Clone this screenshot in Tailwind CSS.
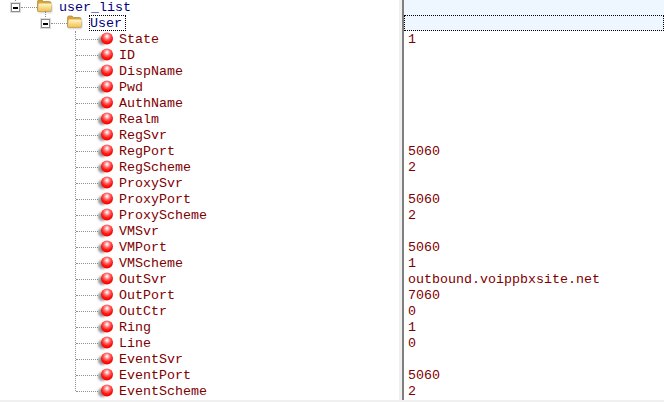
<!DOCTYPE html>
<html lang="en">
<head>
    <title>user_list</title>
    <meta charset="UTF-8">
    <script src="https://cdn.jsdelivr.net/npm/@tailwindcss/browser@4"></script>
</head>
<body class="bg-white overflow-hidden">
    <svg width="0" height="0" class="absolute">
        <defs>
            <radialGradient id="ball" cx="0.5" cy="0.32" r="0.72">
                <stop offset="0" stop-color="#ffffff"/>
                <stop offset="0.14" stop-color="#ffd0d0"/>
                <stop offset="0.38" stop-color="#ff6464"/>
                <stop offset="0.68" stop-color="#ff1010"/>
                <stop offset="1" stop-color="#f40000"/>
            </radialGradient>
            <linearGradient id="folder" x1="0" y1="0" x2="0" y2="1">
                <stop offset="0" stop-color="#fff8c8"/>
                <stop offset="1" stop-color="#efbe50"/>
            </linearGradient>
            <filter id="soft" x="-50%" y="-50%" width="200%" height="200%">
                <feGaussianBlur stdDeviation="1"/>
            </filter>
            <symbol id="folder-icon" viewBox="0 0 16 14">
                <path d="M1.500 13.500h13.500v-8h-13.500z" fill="#000" opacity="0.25" filter="url(#soft)"/>
                <path d="M.5 11.500V2.500q0-1.500 1.500-1.500h3L6.500 2.500h6q1.500 0 1.500 1.500v7.500q0 1-1 1H1.500q-1 0-1-1z" fill="#d9a53a" stroke="#a8873c" stroke-width="0.7"/>
                <path d="M1 11.500L1.500 5.500q0-1 1-1h10.500q1.500 0 1.500 1l-.5 6q0 1-1 1H2q-1 0-1-1z" fill="url(#folder)"/>
            </symbol>
            <symbol id="ball-icon" viewBox="0 0 17 16">
                <circle cx="5.500" cy="9.500" r="4.500" fill="#000" opacity="0.4" filter="url(#soft)"/>
                <circle cx="10" cy="7.500" r="6" fill="url(#ball)"/>
            </symbol>
        </defs>
    </svg>

    <div class="flex h-[402px] w-[664px] font-['Liberation_Mono',monospace] text-[13.33px] leading-4 text-[#800000]">
        <!-- tree -->
        <div class="relative w-[399px] -mt-px">
            <div class="relative h-4">
                <span class="absolute left-[15px] top-0 h-1 border-l border-dotted border-[#8f8f8f]"></span>
                <span class="absolute left-[21px] top-2 w-4 border-t border-dotted border-[#8f8f8f]"></span>
                <span class="absolute left-[11px] top-1 flex size-[9px] items-center justify-center border border-[#8c8c8c] bg-white shadow-[0_0_0_1px_#dcdcdc]"><span class="h-[2px] w-[5px] bg-black"></span></span>
                <svg class="absolute left-[37px] -top-px size-4"><use href="#folder-icon"/></svg>
                <span class="absolute left-[59px] top-px text-[#000080]">user_list</span>
            </div>
            <div class="relative h-4">
                <span class="absolute left-[45px] -top-1 h-2 border-l border-dotted border-[#8f8f8f]"></span>
                <span class="absolute left-[51px] top-2 w-4 border-t border-dotted border-[#8f8f8f]"></span>
                <span class="absolute left-[41px] top-1 flex size-[9px] items-center justify-center border border-[#8c8c8c] bg-white shadow-[0_0_0_1px_#dcdcdc]"><span class="h-[2px] w-[5px] bg-black"></span></span>
                <svg class="absolute left-[67px] -top-px size-4"><use href="#folder-icon"/></svg>
                <span class="absolute left-[89px] top-0 h-4 w-[37px] outline outline-1 -outline-offset-1 outline-dotted outline-black pl-px pt-px text-[#000080]">User</span>
            </div>
            <span class="absolute left-[75px] top-8 h-[360px] border-l border-dotted border-[#8f8f8f]"></span>
            <div id="names"></div>
        </div>

        <!-- splitter -->
        <div class="flex w-[5px] shrink-0">
            <div class="w-[3px] bg-[#f0f0f0]"></div>
            <div class="w-[2px] bg-[#808080]"></div>
        </div>

        <!-- values -->
        <div class="flex-1 -mt-px">
            <div class="h-4 bg-[#eef6ff]"></div>
            <div class="h-4 bg-[#eef6ff] outline outline-1 -outline-offset-1 outline-dotted outline-black"></div>
            <div id="values" class="pl-1 pt-px"></div>
        </div>
    </div>
    <div class="absolute left-0 top-[400px] h-[2px] w-[664px] bg-[#f0f0f0]"></div>

    <script>
        const rows = [
            ['State', '1'], ['ID', ''], ['DispName', ''], ['Pwd', ''], ['AuthName', ''], ['Realm', ''],
            ['RegSvr', ''], ['RegPort', '5060'], ['RegScheme', '2'], ['ProxySvr', ''], ['ProxyPort', '5060'],
            ['ProxyScheme', '2'], ['VMSvr', ''], ['VMPort', '5060'], ['VMScheme', '1'],
            ['OutSvr', 'outbound.voippbxsite.net'], ['OutPort', '7060'], ['OutCtr', '0'], ['Ring', '1'],
            ['Line', '0'], ['EventSvr', ''], ['EventPort', '5060'], ['EventScheme', '2']
        ];
        document.getElementById('names').innerHTML = rows.map(r => `
            <div class="relative h-4">
                <span class="absolute left-[76px] top-2 w-[22px] border-t border-dotted border-[#8f8f8f]"></span>
                <svg class="absolute left-[97px] top-0 w-[17px] h-4"><use href="#ball-icon"/></svg>
                <span class="absolute left-[119px] top-px">${r[0]}</span>
            </div>`).join('');
        document.getElementById('values').innerHTML = rows.map(r => `<div class="h-4">${r[1]}</div>`).join('');
    </script>
</body>
</html>
